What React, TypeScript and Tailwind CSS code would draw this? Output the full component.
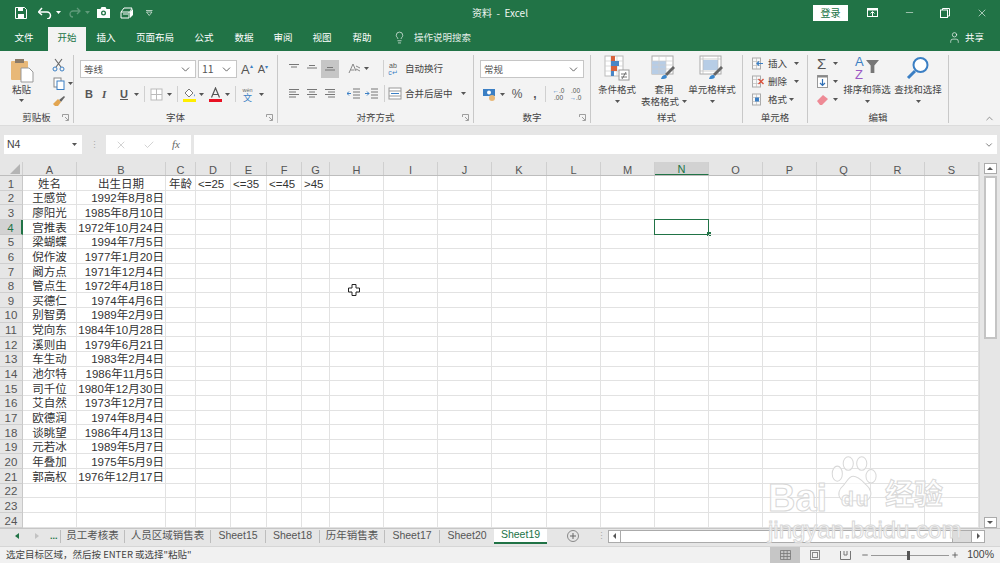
import React from 'react'
import { ChevronDown, ChevronUp, Lightbulb, Minus, Plus, User, X, Check } from 'lucide-react'

const COLUMNS = [
  { name: 'A', w: 54 }, { name: 'B', w: 89 }, { name: 'C', w: 30 }, { name: 'D', w: 35 },
  { name: 'E', w: 36 }, { name: 'F', w: 35 }, { name: 'G', w: 28 }, { name: 'H', w: 54 },
  { name: 'I', w: 54 }, { name: 'J', w: 54 }, { name: 'K', w: 55 }, { name: 'L', w: 54 },
  { name: 'M', w: 54 }, { name: 'N', w: 54 }, { name: 'O', w: 54 }, { name: 'P', w: 54 },
  { name: 'Q', w: 54 }, { name: 'R', w: 54 }, { name: 'S', w: 54 },
]

const PEOPLE = [
  ['王感觉', '1992年8月8日'], ['廖阳光', '1985年8月10日'], ['宫推表', '1972年10月24日'],
  ['梁蝴蝶', '1994年7月5日'], ['倪作波', '1977年1月20日'], ['阚方点', '1971年12月4日'],
  ['管点生', '1972年4月18日'], ['买德仁', '1974年4月6日'], ['别智勇', '1989年2月9日'],
  ['党向东', '1984年10月28日'], ['溪则由', '1979年6月21日'], ['车生动', '1983年2月4日'],
  ['池尔特', '1986年11月5日'], ['司千位', '1980年12月30日'], ['艾自然', '1973年12月7日'],
  ['欧德润', '1974年8月4日'], ['谈眺望', '1986年4月13日'], ['元若冰', '1989年5月7日'],
  ['年叠加', '1975年5月9日'], ['郭高权', '1976年12月17日'],
]

const HEADER_ROW: Record<string, string> = {
  A: '姓名', B: '出生日期', C: '年龄', D: '<=25', E: '<=35', F: '<=45', G: '>45',
}

const TABS = [
  { label: '员工考核表', w: 64 }, { label: '人员区域销售表', w: 86 }, { label: 'Sheet15', w: 55 },
  { label: 'Sheet18', w: 54 }, { label: '历年销售表', w: 65 }, { label: 'Sheet17', w: 55 }, { label: 'Sheet20', w: 55 },
]

const Caret = ({ className = '' }: { className?: string }) => (
  <svg width="5" height="3" viewBox="0 0 5 3" className={`shrink-0 ${className}`}><path d="M0 0h5L2.5 3z" fill="#555" /></svg>
)

const Lines = ({ widths, w = 12 }: { widths: [number, number][]; w?: number }) => (
  <svg width={w} height="12" viewBox={`0 0 ${w} 12`}>
    {widths.map(([x, len], i) => (
      <rect key={i} x={x} y={1 + i * 2.5} width={len} height="1" fill="#777" />
    ))}
  </svg>
)

const Group = ({ w, label, launcher, children }: { w: number; label: string; launcher?: boolean; children: React.ReactNode }) => (
  <div className="flex flex-col shrink-0 h-[68px] border-r border-[#c8c8c8] relative" style={{ width: w }}>
    <div className="flex h-[57px] min-h-0">{children}</div>
    <div className="flex-1 flex items-center justify-center text-[9.5px] leading-[11px] text-[#444]">{label}</div>
    {launcher && (
      <svg width="7" height="7" viewBox="0 0 7 7" className="absolute right-[4px] bottom-[2px]">
        <path d="M.5 3V.5H6.5V6.5H3.5M3 3l3 3" fill="none" stroke="#888" strokeWidth="0.8" />
      </svg>
    )}
  </div>
)

const BigButton = ({ w, icon, lines, caretInline }: { w: number; icon: React.ReactNode; lines: string[]; caretInline?: boolean }) => (
  <div className="flex flex-col items-center shrink-0 text-[9.5px] leading-[12px] text-[#444]" style={{ width: w }}>
    <div className="h-[26px] flex items-end justify-center">{icon}</div>
    <div className="mt-[2px] text-center whitespace-nowrap">{lines[0]}</div>
    <div className="flex items-center justify-center gap-[3px] h-[12px] whitespace-nowrap">
      {lines[1]}
      {(caretInline || lines.length === 1) && <Caret />}
    </div>
  </div>
)

const CondFormatIcon = () => (
  <svg width="26" height="26" viewBox="0 0 26 26">
    <rect x="1" y="1" width="18" height="20" fill="#fff" stroke="#bbb" />
    <path d="M1 6h18M1 11h18M1 16h18M7 1v20M13 1v20" stroke="#ccc" strokeWidth="0.7" />
    <rect x="7" y="1" width="4" height="5" fill="#d9623b" />
    <rect x="7" y="6" width="8" height="5" fill="#4a86c5" />
    <rect x="7" y="11" width="6" height="5" fill="#d9623b" />
    <rect x="7" y="16" width="3" height="5" fill="#4a86c5" />
    <rect x="15" y="15" width="10" height="10" fill="#fff" stroke="#999" />
    <path d="M17 19h6M17 22h6M22 17l-4 7" stroke="#555" strokeWidth="0.8" />
  </svg>
)

const TableFormatIcon = ({ light }: { light?: boolean }) => (
  <svg width="26" height="26" viewBox="0 0 26 26">
    <rect x="1" y="1" width="21" height="18" fill="#fff" stroke="#aaa" />
    <rect x={light ? 4 : 1} y={light ? 5 : 6} width={light ? 15 : 14} height={light ? 10 : 13} fill="#b7cde6" />
    {!light && <path d="M1 6h21M1 10h21M1 14h21M8 1v18M15 1v18" stroke="#ccc" strokeWidth="0.7" />}
    {light && <path d="M1 4h21M4 1v18M19 1v18M1 16h21" stroke="#bbb" strokeWidth="0.7" />}
    <path d="M14 19l8-8 2 2-8 8z" fill="#666" />
    <path d="M10 24c1-4 3-4 5-4l1 2c-1 2-3 2-6 2z" fill="#3b87cc" />
  </svg>
)

const CellIcon = ({ kind }: { kind: 'insert' | 'delete' | 'format' }) => (
  <svg width="13" height="13" viewBox="0 0 13 13">
    <rect x="1.5" y="1" width="8" height="11" fill="#f8f8f8" stroke="#aaa" />
    <path d="M1.5 4.5h8M1.5 8.5h8M5.5 1v11" stroke="#bbb" strokeWidth="0.7" />
    {kind === 'insert' && <path d="M12 6.5H6M8 4.5l-2 2 2 2" stroke="#3b7fc4" strokeWidth="1.2" fill="none" />}
    {kind === 'delete' && <path d="M7.5 4l5 5M12.5 4l-5 5" stroke="#d9503b" strokeWidth="1.4" />}
    {kind === 'format' && <rect x="4" y="4.5" width="4" height="4" fill="#3b7fc4" />}
  </svg>
)

const SmallRow = ({ kind, label, caretClass }: { kind: 'insert' | 'delete' | 'format'; label: string; caretClass: string }) => (
  <div className="h-[18px] flex items-center text-[9.5px] text-[#444]">
    <CellIcon kind={kind} />
    <span className="ml-[4px] whitespace-nowrap">{label}</span>
    <Caret className={caretClass} />
  </div>
)

function Ribbon() {
  return (
    <div className="h-[74px] bg-[#f3f3f3] flex pt-[4px] shrink-0 relative">
      <Group w={74} label="剪贴板" launcher>
        <div className="w-[46px] flex flex-col items-center text-[9.5px] text-[#444]">
          <svg width="24" height="25" viewBox="0 0 24 25" className="mt-[3px] shrink-0">
            <rect x="1" y="3" width="17" height="19" rx="1" fill="#e8b878" />
            <rect x="5" y="1" width="9" height="4" fill="#8a7a68" />
            <path d="M11 10h8l4 4v10H11z" fill="#fff" stroke="#999" />
          </svg>
          <span className="leading-[12px]">粘贴</span>
          <Caret className="mt-[4px]" />
        </div>
        <div className="flex flex-col items-center gap-[5px] pt-[3px] pl-[1px]">
          <svg width="13" height="14" viewBox="0 0 13 14"><path d="M3 1l6 8M10 1L4 9" stroke="#666" strokeWidth="1.1" /><circle cx="3" cy="11" r="2" fill="none" stroke="#3b7fc4" /><circle cx="10" cy="11" r="2" fill="none" stroke="#3b7fc4" /></svg>
          <div className="flex items-center gap-[3px] ml-[9px]">
            <svg width="12" height="13" viewBox="0 0 12 13"><rect x="1" y="1" width="7" height="9" fill="#fff" stroke="#888" /><rect x="4" y="4" width="7" height="8.5" fill="#fff" stroke="#3b7fc4" /></svg>
            <Caret />
          </div>
          <svg width="13" height="12" viewBox="0 0 13 12"><path d="M7 5l5-4 1 1-4 5z" fill="#666" /><path d="M1 9l5-5 3 3-3 4H3z" fill="#e2a550" /></svg>
        </div>
      </Group>

      <Group w={204} label="字体" launcher>
        <div className="flex flex-col pl-[6px] pt-[5px]">
          <div className="flex items-center h-[18px]">
            <div className="w-[116px] h-[18px] bg-white border border-[#c6c6c6] flex items-center justify-between px-[3px] text-[9.5px] text-[#555]">
              等线 <ChevronDown size={13} strokeWidth={1.5} color="#444" />
            </div>
            <div className="w-[39px] ml-[2px] h-[18px] bg-white border border-[#c6c6c6] flex items-center justify-between px-[3px] text-[10.5px] text-[#555]">
              11 <ChevronDown size={13} strokeWidth={1.5} color="#444" />
            </div>
            <span className="ml-[4px] text-[13px] text-[#555] leading-none [font-family:'Liberation_Sans',sans-serif]">A<span className="text-[6px] text-[#3b7fc4] align-top">▴</span></span>
            <span className="ml-[5px] text-[11px] text-[#555] leading-none [font-family:'Liberation_Sans',sans-serif]">A<span className="text-[6px] text-[#3b7fc4] align-top">▾</span></span>
          </div>
          <div className="flex items-center h-[18px] mt-[7px] text-[#555]">
            <span className="ml-[5px] w-[17px] font-bold text-[11px] leading-none [font-family:'Liberation_Sans',sans-serif]">B</span>
            <span className="w-[18px] italic text-[11px] font-bold leading-none [font-family:'Liberation_Serif',serif]">I</span>
            <span className="w-[14px] underline text-[11px] font-bold leading-none [font-family:'Liberation_Sans',sans-serif]">U</span>
            <Caret />
            <span className="w-px h-[16px] bg-[#d0d0d0] ml-[5px] mr-[5px]" />
            <svg width="13" height="13" viewBox="0 0 13 13"><rect x="1" y="1" width="11" height="11" fill="#fff" stroke="#bbb" /><path d="M6.5 1v11M1 6.5h11" stroke="#bbb" /></svg>
            <Caret className="ml-[4px]" />
            <span className="w-px h-[16px] bg-[#d0d0d0] ml-[5px] mr-[5px]" />
            <svg width="13" height="15" viewBox="0 0 13 15"><path d="M2 6l4-4 4 4-4 4z" fill="#fff" stroke="#777" /><path d="M11 7c1 1 1 2 0 2.500z" fill="#3b7fc4" /><rect x="0" y="12" width="13" height="3" fill="#ffee00" /></svg>
            <Caret className="ml-[3px]" />
            <svg width="13" height="15" viewBox="0 0 13 15" className="ml-[5px]"><path d="M2.500 10.500L6.500 1l4 9.500M4 7.500h5" fill="none" stroke="#555" strokeWidth="1.2" /><rect x="0" y="12" width="13" height="3" fill="#e81123" /></svg>
            <Caret className="ml-[3px]" />
            <span className="w-px h-[16px] bg-[#d0d0d0] ml-[5px] mr-[4px]" />
            <span className="flex flex-col items-center w-[15px] leading-none">
              <span className="text-[5.5px] leading-[6px] text-[#666] [font-family:'Liberation_Sans',sans-serif]">wén</span>
              <span className="text-[9px] leading-[9px] text-[#3b7fc4]">文</span>
            </span>
            <Caret className="ml-[4px]" />
          </div>
        </div>
      </Group>

      <Group w={196} label="对齐方式" launcher>
        <div className="flex flex-col pl-[7px] pt-[4px] w-full">
          <div className="flex items-center h-[19px]">
            <span className="w-[18px] flex justify-center"><Lines widths={[[1, 10], [3, 6]]} /></span>
            <span className="w-[18px] flex justify-center pt-[3px]"><Lines widths={[[3, 6], [1, 10]]} /></span>
            <span className="w-[18px] h-[18px] bg-[#c6c6c6] flex justify-center pt-[6px]"><Lines widths={[[3, 6], [1, 10]]} /></span>
            <svg width="13" height="12" viewBox="0 0 13 12" className="ml-[9px]"><path d="M1 10L5 1l3 7M2.500 7h4" fill="none" stroke="#888" /><path d="M8 3l4 2M8 6l4 2" stroke="#888" /></svg>
            <Caret className="ml-[3px]" />
            <span className="w-px h-[17px] bg-[#d0d0d0] ml-[14px]" />
            <span className="w-[18px] flex flex-col items-center text-[7px] leading-[7px] text-[#555] [font-family:'Liberation_Sans',sans-serif]"><span>ab</span><span className="text-[#3b7fc4]">c↵</span></span>
            <span className="ml-[3px] text-[9.5px] text-[#444] whitespace-nowrap">自动换行</span>
          </div>
          <div className="flex items-center h-[19px] mt-[6px]">
            <span className="w-[18px] flex justify-center"><Lines widths={[[1, 10], [1, 7], [1, 10], [1, 7]]} /></span>
            <span className="w-[18px] flex justify-center"><Lines widths={[[1, 10], [3, 6], [1, 10], [3, 6]]} /></span>
            <span className="w-[18px] flex justify-center"><Lines widths={[[1, 10], [4, 7], [1, 10], [4, 7]]} /></span>
            <svg width="13" height="12" viewBox="0 0 13 12" className="ml-[8px]"><path d="M6 1h7M6 4h7M6 7h7M6 10h7" stroke="#777" fill="none" /><path d="M0 5.500h4M2 3.500L0 5.500l2 2" stroke="#3b7fc4" fill="none" /></svg>
            <svg width="13" height="12" viewBox="0 0 13 12" className="ml-[5px]"><path d="M6 1h7M6 4h7M6 7h7M6 10h7" stroke="#777" /><path d="M0 5.500h4M2 3.500l2 2-2 2" stroke="#3b7fc4" fill="none" /></svg>
            <span className="w-px h-[17px] bg-[#d0d0d0] ml-[6px] mr-[3px]" />
            <svg width="14" height="13" viewBox="0 0 14 13"><rect x="1" y="1" width="12" height="11" fill="#fff" stroke="#999" /><path d="M1 4h12M1 9h12" stroke="#999" /><path d="M3 6.500h8" stroke="#3b7fc4" /></svg>
            <span className="ml-[3px] text-[9.5px] text-[#444] whitespace-nowrap">合并后居中</span>
            <Caret className="ml-[8px]" />
          </div>
        </div>
      </Group>

      <Group w={117} label="数字" launcher>
        <div className="flex flex-col pl-[6px] pt-[5px]">
          <div className="w-[104px] h-[18px] bg-white border border-[#c6c6c6] flex items-center justify-between px-[3px] text-[9.5px] text-[#555]">
            常规 <ChevronDown size={13} strokeWidth={1.5} color="#444" />
          </div>
          <div className="flex items-center h-[18px] mt-[7px] text-[#555]">
            <svg width="14" height="13" viewBox="0 0 14 13" className="ml-[3px]"><rect x="0" y="1" width="12" height="7" fill="#3b7fc4" /><circle cx="6" cy="4.500" r="2" fill="#fff" /><circle cx="9" cy="10" r="3" fill="#e8b878" /></svg>
            <Caret className="ml-[3px]" />
            <span className="ml-[3px] w-[18px] text-center text-[12px] leading-none [font-family:'Liberation_Sans',sans-serif]">%</span>
            <span className="w-[18px] text-center text-[12px] font-bold leading-none [font-family:'Liberation_Sans',sans-serif]">,</span>
            <span className="w-px h-[16px] bg-[#d0d0d0] ml-[1px] mr-[4px]" />
            <span className="w-[17px] text-[6.5px] leading-[7px] text-center [font-family:'Liberation_Sans',sans-serif]"><span className="text-[#3b7fc4]">←</span>.0<br />.00</span>
            <span className="w-[17px] text-[6.5px] leading-[7px] text-center [font-family:'Liberation_Sans',sans-serif]">.00<br /><span className="text-[#3b7fc4]">→</span>.0</span>
          </div>
        </div>
      </Group>

      <Group w={152} label="样式">
        <BigButton w={52} icon={<CondFormatIcon />} lines={['条件格式']} />
        <BigButton w={42} icon={<TableFormatIcon />} lines={['套用', '表格格式']} caretInline />
        <BigButton w={54} icon={<TableFormatIcon light />} lines={['单元格样式']} />
      </Group>

      <Group w={65} label="单元格">
        <div className="flex flex-col pl-[8px] -mt-px">
          <SmallRow kind="insert" label="插入" caretClass="ml-[7px]" />
          <SmallRow kind="delete" label="删除" caretClass="ml-[7px]" />
          <SmallRow kind="format" label="格式" caretClass="ml-[2px]" />
        </div>
      </Group>

      <Group w={141} label="编辑">
        <div className="flex flex-col w-[34px] pl-[9px] -mt-px">
          <div className="h-[18px] flex items-center gap-[5px]"><span className="text-[15px] text-[#555] w-[11px] leading-none [font-family:'Liberation_Sans',sans-serif]">Σ</span><Caret /></div>
          <div className="h-[18px] flex items-center gap-[5px]">
            <svg width="11" height="13" viewBox="0 0 11 13"><rect x=".5" y=".5" width="10" height="12" fill="#fff" stroke="#999" /><rect x=".5" y=".5" width="10" height="2" fill="#888" /><path d="M5.500 4v6M3 8l2.500 2.500L8 8" stroke="#2f6fb5" strokeWidth="1.2" fill="none" /></svg>
            <Caret />
          </div>
          <div className="h-[18px] flex items-center gap-[5px]">
            <svg width="11" height="11" viewBox="0 0 11 11"><path d="M0 7l6-6 5 4-6 6H3z" fill="#ee8a95" /></svg>
            <Caret />
          </div>
        </div>
        <BigButton w={50} icon={
          <span className="relative w-[24px] h-[26px] block [font-family:'Liberation_Sans',sans-serif]">
            <span className="absolute left-0 top-0 text-[13px] leading-[13px] text-[#3b7fc4]">A</span>
            <span className="absolute left-0 top-[13px] text-[13px] leading-[13px] text-[#9b59c4]">Z</span>
            <svg width="13" height="13" viewBox="0 0 14 14" className="absolute right-0 top-[5px]"><path d="M0 0h14L9 6v8H5V6z" fill="#777" /></svg>
          </span>
        } lines={['排序和筛选']} />
        <BigButton w={52} icon={
          <svg width="24" height="25" viewBox="0 0 24 25"><circle cx="14.500" cy="9" r="7" fill="#fff" stroke="#3b7fc4" strokeWidth="2" /><path d="M9 15l-7 7" stroke="#3b7fc4" strokeWidth="3" /></svg>
        } lines={['查找和选择']} />
      </Group>
      <ChevronUp size={11} color="#666" strokeWidth={1.5} className="absolute right-[5px] bottom-[1px]" />
    </div>
  )
}

function TopBars() {
  const menu = ['插入', '页面布局', '公式', '数据', '审阅', '视图', '帮助']
  const menuW = [40, 58, 40, 40, 38, 40, 40]
  return (
    <div className="bg-[#217346] text-white shrink-0">
      <div className="h-[27px] flex items-center relative pb-[2px]">
        <svg width="12" height="12" viewBox="0 0 12 12" className="ml-[15px]"><path d="M.5.5h9l2 2v9H.5z" fill="none" stroke="#fff" /><rect x="3" y="1" width="5" height="3" fill="#fff" /><rect x="3" y="7" width="6" height="4" fill="#fff" /></svg>
        <svg width="14" height="12" viewBox="0 0 14 12" className="ml-[11px]"><path d="M1 5h8a3.500 3.500 0 010 7" fill="none" stroke="#fff" strokeWidth="1.500" /><path d="M4 1L0.500 5 4 8" fill="none" stroke="#fff" strokeWidth="1.500" /></svg>
        <svg width="5" height="3" viewBox="0 0 5 3" className="ml-[4px]"><path d="M0 0h5L2.500 3z" fill="#fff" /></svg>
        <svg width="12" height="11" viewBox="0 0 12 11" className="ml-[8px]"><path d="M11 4H4a3 3 0 000 6M8 1l3 3-3 3" fill="none" stroke="#5f9a7a" strokeWidth="1.300" /></svg>
        <svg width="5" height="3" viewBox="0 0 5 3" className="ml-[4px]"><path d="M0 0h5L2.500 3z" fill="#5f9a7a" /></svg>
        <svg width="13" height="11" viewBox="0 0 13 11" className="ml-[7px]"><path d="M0 2h3.500l1-2h4l1 2H13v9H0z" fill="#fff" /><circle cx="6.500" cy="6" r="2.500" fill="#217346" /><circle cx="6.500" cy="6" r="1.200" fill="#fff" /></svg>
        <svg width="14" height="12" viewBox="0 0 14 12" className="ml-[10px]"><path d="M1 5l3-4h8l-2 4zM1 5v6h8V5" fill="none" stroke="#fff" /><path d="M10 5l3-3v6l-3 3z" fill="#fff" /><path d="M3 7h5" stroke="#fff" /></svg>
        <svg width="7" height="6" viewBox="0 0 7 6" className="ml-[12px]"><path d="M0 .5h6.500M.5 2L3.250 5.500 6 2z" fill="none" stroke="#d7e5dc" strokeWidth=".8" /></svg>
        <div className="absolute left-0 right-0 top-0 h-full pb-[3px] flex items-center justify-center text-[10px] text-[#f0f6f2] pointer-events-none">资料&nbsp; -&nbsp; Excel</div>
        <div className="ml-auto flex items-center">
          <div className="w-[35px] h-[16px] bg-white text-[#217346] text-[10px] flex items-center justify-center">登录</div>
          <svg width="11" height="10" viewBox="0 0 11 10" className="ml-[19px]"><rect x=".5" y=".5" width="10" height="8" fill="none" stroke="#fff" /><path d="M0 .5h11v2H0z" fill="#fff" /><path d="M5.500 8V4M3.500 5.500l2-2 2 2" stroke="#fff" fill="none" /></svg>
          <Minus size={11} strokeWidth={1.2} className="ml-[26px]" />
          <svg width="10" height="10" viewBox="0 0 10 10" className="ml-[25px]"><rect x=".5" y="2" width="7" height="7.500" fill="none" stroke="#fff" /><path d="M2.500 2V.5h7V8H8" fill="none" stroke="#fff" /></svg>
          <X size={12} strokeWidth={1.2} className="ml-[26px] mr-[12px]" />
        </div>
      </div>
      <div className="h-[24px] flex items-end text-[9.5px]">
        <div className="w-[48px] h-full pb-[3px] flex items-center justify-center">文件</div>
        <div className="w-[38px] h-full pb-[3px] bg-[#f3f3f3] text-[#217346] flex items-center justify-center">开始</div>
        {menu.map((m, i) => (
          <div key={m} className="h-full pb-[3px] flex items-center justify-center shrink-0 whitespace-nowrap" style={{ width: menuW[i] }}>{m}</div>
        ))}
        <div className="h-full pb-[3px] flex items-center">
          <Lightbulb size={13} strokeWidth={1.2} className="ml-[11px]" />
          <span className="ml-[8px] text-[#e3eee8]">操作说明搜索</span>
        </div>
        <div className="ml-auto h-full pb-[3px] flex items-center mr-[16px]">
          <User size={13} strokeWidth={1.2} />
          <span className="ml-[4px]">共享</span>
        </div>
      </div>
    </div>
  )
}

function FormulaBar() {
  return (
    <div className="h-[37px] bg-[#e6e6e6] flex items-center pl-[4px] pr-[3px] pt-[1px] shrink-0 border-t border-[#dcdcdc]">
      <div className="w-[78px] h-[19px] bg-white flex items-center justify-between pl-[3px] pr-[5px] text-[10.500px] text-[#444] [font-family:'Liberation_Sans',sans-serif]">
        N4 <Caret />
      </div>
      <div className="w-[24px] flex justify-center text-[#aaa] text-[9px] leading-[3px]">⋮</div>
      <div className="w-[85px] h-[19px] bg-white flex items-center text-[#bbb]">
        <X size={12} strokeWidth={1.300} className="ml-[9px]" />
        <Check size={12} strokeWidth={1.300} className="ml-[16px]" />
        <span className="ml-[17px] italic text-[11px] text-[#666] [font-family:'Liberation_Serif',serif]">fx</span>
      </div>
      <div className="flex-1 ml-[3px] h-[19px] bg-white flex items-center justify-end pr-[3px]">
        <ChevronDown size={10} strokeWidth={2} color="#666" />
      </div>
    </div>
  )
}

function ColumnHeader() {
  return (
    <div className="h-[14px] flex bg-[#e6e6e6] text-[11px] text-[#555] shrink-0 border-b border-[#bdbdbd] [font-family:'Liberation_Sans',sans-serif]">
      <div className="w-[23px] shrink-0 border-r border-[#cfcfcf] flex items-end justify-end pr-[2px] pb-[1px]">
        <svg width="10" height="10" viewBox="0 0 10 10"><path d="M10 0v10H0z" fill="#b4b4b4" /></svg>
      </div>
      {COLUMNS.map((c) => (
        <div
          key={c.name}
          style={{ width: c.w }}
          className={`shrink-0 flex items-end justify-center border-r border-[#cfcfcf] leading-[10px] ${c.name === 'N' ? 'bg-[#d2d2d2] text-[#217346] border-b border-b-[#217346]' : ''}`}
        >
          {c.name}
        </div>
      ))}
      <div className="flex-1 bg-white" />
    </div>
  )
}

function Cell({ col, row }: { col: { name: string; w: number }; row: number }) {
  let text: string | undefined
  if (row === 1) text = HEADER_ROW[col.name]
  else if (row <= 21 && col.name === 'A') text = PEOPLE[row - 2][0]
  else if (row <= 21 && col.name === 'B') text = PEOPLE[row - 2][1]
  const align = row > 1 && col.name === 'B'
    ? 'justify-end pr-[1px]'
    : col.name === 'A' || (row === 1 && col.name === 'B') || col.name === 'C'
      ? 'justify-center'
      : 'justify-start pl-[2px]'
  return (
    <div
      style={{ width: col.w }}
      className={`shrink-0 relative flex items-center pt-[3px] leading-none overflow-visible whitespace-nowrap border-r border-b border-[#e2e2e2] ${align}`}
    >
      {text}
      {row === 4 && col.name === 'N' && (
        <span className="absolute left-[-1px] top-[-1px] right-[-1px] bottom-[-1px] border-[1.500px] border-[#217346]">
          <span className="absolute right-[-2.500px] bottom-[-2.500px] w-[4px] h-[4px] bg-[#217346]" />
        </span>
      )}
    </div>
  )
}

function Grid() {
  const rows = Array.from({ length: 24 }, (_, i) => i + 1)
  return (
    <div className="flex-1 min-h-0 flex flex-col bg-white overflow-hidden">
      <ColumnHeader />
      <div className="flex-1 min-h-0 grid grid-rows-[repeat(24,14.667px)] text-[11.500px] text-[#333] [font-family:'Liberation_Sans','Noto_Sans_CJK_SC',sans-serif]">
        {rows.map((r) => (
          <div key={r} className="flex min-h-0">
            <div className={`w-[23px] shrink-0 flex items-center justify-center pt-[3px] leading-none text-[11.500px] border-r border-b ${r === 4 ? 'bg-[#d2d2d2] text-[#217346] border-r-[#217346] border-r-2 border-b-[#c8c8c8]' : 'bg-[#e6e6e6] text-[#555] border-r-[#c8c8c8] border-b-[#cfcfcf]'}`}>
              {r}
            </div>
            {COLUMNS.map((c) => <Cell key={c.name} col={c} row={r} />)}
          </div>
        ))}
      </div>
    </div>
  )
}

function VScrollbar() {
  return (
    <div className="w-[21px] shrink-0 bg-[#e6e6e6] border-l border-[#d6d6d6] flex flex-col items-center pt-[1px]">
      <div className="w-[13px] h-[11px] bg-white border border-[#ababab] flex items-center justify-center"><svg width="6" height="3" viewBox="0 0 6 3"><path d="M0 3h6L3 0z" fill="#555" /></svg></div>
      <div className="w-[13px] h-[163px] mt-[2px] bg-white border-2 border-[#c4c4c4]" />
      <div className="flex-1" />
      <div className="w-[13px] h-[11px] bg-white border border-[#ababab] flex items-center justify-center"><svg width="6" height="3" viewBox="0 0 6 3"><path d="M0 0h6L3 3z" fill="#555" /></svg></div>
    </div>
  )
}

function SheetTabs() {
  return (
    <div className="h-[18px] bg-[#e6e6e6] flex items-center pb-[3px] shrink-0 border-t border-[#c6c6c6] text-[10.5px] text-[#555] [font-family:'Liberation_Sans','Noto_Sans_CJK_SC',sans-serif]">
      <svg width="4" height="6" viewBox="0 0 4 6" className="ml-[15px]"><path d="M4 0v6L0 3z" fill="#217346" /></svg>
      <svg width="4" height="6" viewBox="0 0 4 6" className="ml-[16px]"><path d="M0 0v6l4-3z" fill="#c2c2c2" /></svg>
      <span className="ml-[11px] w-[10px] text-[#217346] font-bold text-[9px] leading-none">...</span>
      {TABS.map((t) => (
        <div key={t.label} className="h-[13px] flex items-center justify-center border-l border-[#bdbdbd] whitespace-nowrap shrink-0" style={{ width: t.w }}>
          {t.label}
        </div>
      ))}
      <div className="w-[53px] h-[15px] bg-white border-b-2 border-[#217346] text-[#217346] flex items-center justify-center shrink-0">Sheet19</div>
      <svg width="12" height="12" viewBox="0 0 12 12" className="ml-[20px]"><circle cx="6" cy="6" r="5.500" fill="none" stroke="#888" /><path d="M6 3v6M3 6h6" stroke="#666" /></svg>
      <span className="ml-[18px] w-[4px] text-[#aaa] text-[9px] leading-none">⋮</span>
      <div className="ml-[7px] w-[377px] h-[13px] flex border border-[#ababab] bg-[#dcdcdc]">
        <div className="w-[12px] bg-white flex items-center justify-center border-r border-[#ababab]"><svg width="3" height="6" viewBox="0 0 3 6"><path d="M3 0v6L0 3z" fill="#555" /></svg></div>
        <div className="w-[332px] bg-white border-r border-[#ababab]" />
        <div className="flex-1" />
        <div className="w-[13px] bg-white flex items-center justify-center border-l border-[#ababab]"><svg width="3" height="6" viewBox="0 0 3 6"><path d="M0 0v6l3-3z" fill="#555" /></svg></div>
      </div>
    </div>
  )
}

function StatusBar() {
  return (
    <div className="h-[17px] bg-[#f1f1f1] flex items-center shrink-0 border-t border-[#d6d6d6] text-[9.500px] text-[#444]">
      <span className="ml-[6px] leading-[12px] -mt-[2px]">选定目标区域，然后按 ENTER 或选择"粘贴"</span>
      <div className="ml-auto flex items-center h-full">
        <div className="w-[30px] h-full bg-[#c6c6c6] flex items-center justify-center">
          <svg width="11" height="10" viewBox="0 0 11 10"><path d="M.5.5h10v9H.5zM.5 3.500h10M.5 6.500h10M3.800.5v9M7.200.5v9" fill="none" stroke="#777" strokeWidth=".8" /></svg>
        </div>
        <div className="w-[30px] flex justify-center">
          <svg width="10" height="10" viewBox="0 0 10 10"><rect x=".5" y=".5" width="9" height="9" fill="none" stroke="#888" /><rect x="2.500" y="2.500" width="5" height="5" fill="none" stroke="#888" /></svg>
        </div>
        <div className="w-[30px] flex justify-center">
          <svg width="11" height="9" viewBox="0 0 11 9"><path d="M.5 0v8.500h10V0M4 0v4h3V0" fill="none" stroke="#777" /></svg>
        </div>
        <Minus size={8} strokeWidth={2.500} color="#555" className="ml-[1px]" />
        <div className="w-[78px] ml-[2px] mr-[1px] h-px bg-[#999] relative">
          <span className="absolute left-[36px] top-[-4px] w-[3px] h-[9px] bg-[#555]" />
        </div>
        <Plus size={8} strokeWidth={2.500} color="#555" className="ml-[1px]" />
        <span className="ml-[8px] mr-[6px] text-[10.500px] [font-family:'Liberation_Sans',sans-serif]">100%</span>
      </div>
    </div>
  )
}

function Watermark() {
  return (
    <div className="absolute left-[766px] top-[455px] w-[184px] h-[90px] pointer-events-none text-white/70 [-webkit-text-stroke:1px_#d8d8d8] [font-family:'Liberation_Sans','Noto_Sans_CJK_SC',sans-serif]">
      <svg width="56" height="54" viewBox="0 0 56 64" className="absolute left-[61px] top-[1px]">
        <g fill="#fff" fillOpacity=".7" stroke="#d8d8d8" strokeWidth="1.200">
          <ellipse cx="7" cy="21" rx="6" ry="9" />
          <ellipse cx="20" cy="9" rx="6" ry="8" />
          <ellipse cx="36" cy="9" rx="6" ry="8" />
          <ellipse cx="47" cy="24" rx="6" ry="8" />
          <path d="M26 24c6 0 10 5 15 10 6 5 8 12 3 17-4 4-10 2-16 2s-12 3-17-2c-4-5-2-12 3-16 5-5 6-11 12-11z" />
        </g>
      </svg>
      <span className="absolute left-[2px] top-[24px] text-[38px] font-bold leading-none">Bai</span>
      <span className="absolute left-[75px] top-[33px] text-[21px] font-bold leading-none tracking-[2px]">du</span>
      <span className="absolute left-[119px] top-[26px] text-[29px] font-bold leading-none whitespace-nowrap">经验</span>
      <span className="absolute left-[2px] top-[63px] text-[24px] leading-none whitespace-nowrap">jingyan.baidu.com</span>
    </div>
  )
}

export default function App() {
  return (
    <div className="w-[1000px] h-[563px] overflow-hidden relative flex flex-col [font-family:'Noto_Sans_CJK_SC','Liberation_Sans',sans-serif]">
      <TopBars />
      <Ribbon />
      <FormulaBar />
      <div className="flex-1 min-h-0 flex">
        <Grid />
        <VScrollbar />
      </div>
      <SheetTabs />
      <StatusBar />
      {/* cell cursor */}
      <svg width="12" height="12" viewBox="0 0 12 12" className="absolute left-[348px] top-[284px]">
        <path d="M4 .5h4v3.500h3.500v4H8v3.500H4V8H.5V4H4z" fill="#fff" stroke="#222" />
      </svg>
      <Watermark />
    </div>
  )
}
